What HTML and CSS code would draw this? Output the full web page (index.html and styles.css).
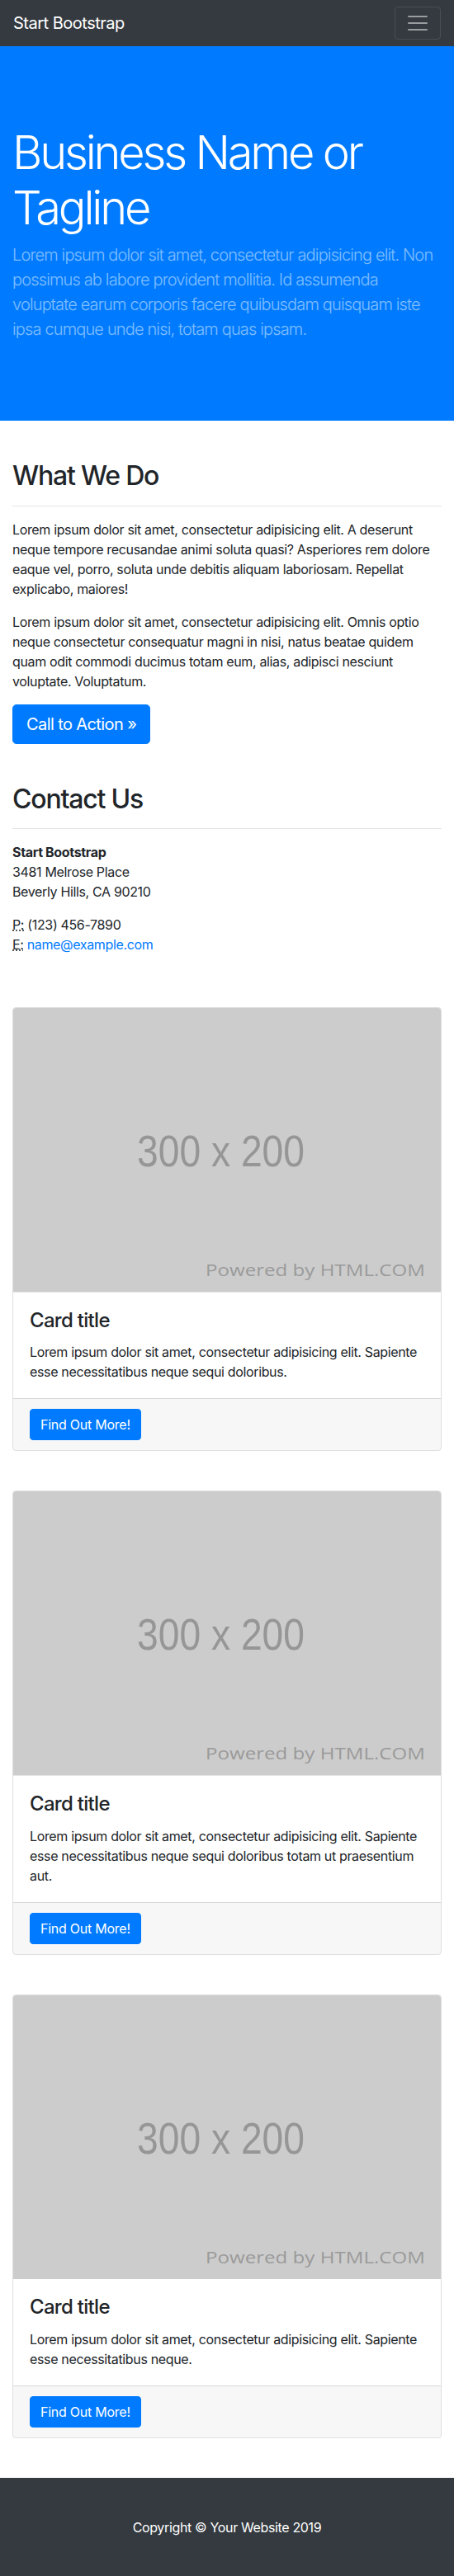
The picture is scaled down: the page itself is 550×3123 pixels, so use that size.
FILE: index.html
```
<!DOCTYPE html>
<html lang="en">
<head>
<meta charset="utf-8">
<title>Business Frontpage - Start Bootstrap Template</title>
<link rel="stylesheet" href="styles.css">
</head>
<body>
<nav class="navbar">
  <a class="brand" href="#">Start Bootstrap</a>
  <button class="toggler" type="button" aria-label="Toggle navigation">
    <svg class="toggler-icon" viewBox="0 0 30 30" width="30" height="30"><path d="M4 7h22M4 15h22M4 23h22" stroke="rgba(255,255,255,0.5)" stroke-width="2" stroke-linecap="round" stroke-miterlimit="10" fill="none"/></svg>
  </button>
</nav>

<header class="hero">
  <div class="container">
    <h1 class="display">Business Name or Tagline</h1>
    <p class="lead">Lorem ipsum dolor sit amet, consectetur adipisicing elit. Non possimus ab labore provident mollitia. Id assumenda voluptate earum corporis facere quibusdam quisquam iste ipsa cumque unde nisi, totam quas ipsam.</p>
  </div>
</header>

<main class="container">
  <section class="block">
    <h2>What We Do</h2>
    <hr>
    <p>Lorem ipsum dolor sit amet, consectetur adipisicing elit. A deserunt neque tempore recusandae animi soluta quasi? Asperiores rem dolore eaque vel, porro, soluta unde debitis aliquam laboriosam. Repellat explicabo, maiores!</p>
    <p>Lorem ipsum dolor sit amet, consectetur adipisicing elit. Omnis optio neque consectetur consequatur magni in nisi, natus beatae quidem quam odit commodi ducimus totam eum, alias, adipisci nesciunt voluptate. Voluptatum.</p>
    <div class="btn-line"><a class="btn btn-lg" href="#">Call to Action &raquo;</a></div>
  </section>

  <section class="block">
    <h2>Contact Us</h2>
    <hr>
    <address>
      <strong>Start Bootstrap</strong><br>
      3481 Melrose Place<br>
      Beverly Hills, CA 90210
    </address>
    <address>
      <abbr title="Phone">P:</abbr> (123) 456-7890<br>
      <abbr title="Email">E:</abbr> <a class="link" href="#">name@example.com</a>
    </address>
  </section>

  <div class="card">
    <svg class="card-img" viewBox="0 0 518 345.33" preserveAspectRatio="none">
      <rect width="518" height="345.33" fill="#cccccc"/>
      <text class="ph-size" x="150" y="192.6" textLength="203" lengthAdjust="spacingAndGlyphs">300 x 200</text>
      <text class="ph-by" x="233" y="325.6" textLength="266" lengthAdjust="spacingAndGlyphs">Powered by HTML.COM</text>
    </svg>
    <div class="card-body">
      <h4 class="card-title">Card title</h4>
      <p class="card-text">Lorem ipsum dolor sit amet, consectetur adipisicing elit. Sapiente esse necessitatibus neque sequi doloribus.</p>
    </div>
    <div class="card-footer"><a class="btn" href="#">Find Out More!</a></div>
  </div>

  <div class="card">
    <svg class="card-img" viewBox="0 0 518 345.33" preserveAspectRatio="none">
      <rect width="518" height="345.33" fill="#cccccc"/>
      <text class="ph-size" x="150" y="192.6" textLength="203" lengthAdjust="spacingAndGlyphs">300 x 200</text>
      <text class="ph-by" x="233" y="325.6" textLength="266" lengthAdjust="spacingAndGlyphs">Powered by HTML.COM</text>
    </svg>
    <div class="card-body">
      <h4 class="card-title">Card title</h4>
      <p class="card-text">Lorem ipsum dolor sit amet, consectetur adipisicing elit. Sapiente esse necessitatibus neque sequi doloribus totam ut praesentium aut.</p>
    </div>
    <div class="card-footer"><a class="btn" href="#">Find Out More!</a></div>
  </div>

  <div class="card">
    <svg class="card-img" viewBox="0 0 518 345.33" preserveAspectRatio="none">
      <rect width="518" height="345.33" fill="#cccccc"/>
      <text class="ph-size" x="150" y="192.6" textLength="203" lengthAdjust="spacingAndGlyphs">300 x 200</text>
      <text class="ph-by" x="233" y="325.6" textLength="266" lengthAdjust="spacingAndGlyphs">Powered by HTML.COM</text>
    </svg>
    <div class="card-body">
      <h4 class="card-title">Card title</h4>
      <p class="card-text">Lorem ipsum dolor sit amet, consectetur adipisicing elit. Sapiente esse necessitatibus neque.</p>
    </div>
    <div class="card-footer"><a class="btn" href="#">Find Out More!</a></div>
  </div>
</main>

<footer class="site-footer">
  <div class="container">
    <p class="copy">Copyright &copy; Your Website 2019</p>
  </div>
</footer>
</body>
</html>
```
FILE: styles.css
```
*, *::before, *::after { box-sizing: border-box; }

body {
  margin: 0;
  font-family: Inter, "Noto Sans", "Liberation Sans", sans-serif;
  font-size: 16px;
  font-weight: 400;
  line-height: 1.5;
  letter-spacing: -0.35px;
  color: #212529;
  background: #fff;
}

.container {
  padding: 0 15px;
}

/* Navbar */
.navbar {
  height: 56px;
  background: #343a40;
  padding: 8px 16px;
  display: flex;
  align-items: center;
  justify-content: space-between;
}
.brand {
  color: #fff;
  font-size: 20px;
  line-height: 30px;
  letter-spacing: -0.5px;
  padding: 5px 0;
  text-decoration: none;
}
.toggler {
  width: 56px;
  height: 40px;
  padding: 4px 12px;
  background: transparent;
  border: 1px solid rgba(255,255,255,0.1);
  border-radius: 4px;
  display: flex;
  align-items: center;
  justify-content: center;
}
.toggler-icon { display: block; width: 30px; height: 30px; }

/* Hero */
.hero {
  background: #007bff;
  padding: 48px 0;
  margin-bottom: 48px;
}
.display {
  margin: 48px 0 8px;
  font-size: 56px;
  font-weight: 300;
  line-height: 1.2;
  letter-spacing: -3.2px;
  color: #fff;
}
.lead {
  margin: 0 0 48px;
  font-size: 20px;
  font-weight: 300;
  line-height: 30px;
  letter-spacing: -0.85px;
  color: rgba(255,255,255,0.5);
}

/* Content */
.block {
  display: flow-root;
  margin-bottom: 48px;
}
h2 {
  margin: 0 0 8px;
  font-size: 32px;
  font-weight: 500;
  line-height: 1.2;
  letter-spacing: -1.2px;
}
hr {
  margin: 16px 0;
  border: 0;
  border-top: 1px solid rgba(0,0,0,0.1);
  height: 0;
}
p { margin: 0 0 16px; }

address {
  margin: 0 0 16px;
  font-style: normal;
  line-height: inherit;
}
address strong { font-weight: 700; }
abbr[title] {
  text-decoration: underline dotted;
  cursor: help;
}
.link { color: #007bff; text-decoration: none; }

.btn-line { line-height: 0; }
.btn {
  display: inline-block;
  vertical-align: top;
  color: #fff;
  background: #007bff;
  border: 1px solid #007bff;
  border-radius: 4px;
  padding: 6px 12px;
  font-size: 16px;
  line-height: 24px;
  letter-spacing: -0.25px;
  text-decoration: none;
}
.btn-lg {
  padding: 8px 16px;
  font-size: 20px;
  line-height: 30px;
  letter-spacing: -0.6px;
  border-radius: 4.8px;
}

/* Cards */
.card {
  display: flow-root;
  border: 1px solid rgba(0,0,0,0.125);
  border-radius: 4px;
  margin-bottom: 48px;
  overflow: hidden;
}
.card-img {
  display: block;
  width: 100%;
  height: 344.5px;
  border-radius: 3px 3px 0 0;
}
.ph-size {
  font-family: "Liberation Sans", Arial, sans-serif;
  font-size: 53px;
  letter-spacing: 0;
  fill: #969696;
}
.ph-by {
  font-family: "Open Sans", "Noto Sans", sans-serif;
  font-size: 20.5px;
  letter-spacing: 0;
  fill: #9a9a9a;
}
.card-body { padding: 20px; }
.card-title {
  margin: 0 0 12px;
  font-size: 24px;
  font-weight: 500;
  line-height: 1.2;
  letter-spacing: -0.7px;
}
.card-text { margin: 0; }
.card-footer {
  padding: 12px 20px;
  background: rgba(0,0,0,0.03);
  border-top: 1px solid rgba(0,0,0,0.125);
  line-height: 0;
}

/* Footer */
.site-footer {
  background: #343a40;
  padding: 48px 0;
}
.copy {
  margin: 0;
  text-align: center;
  color: #fff;
}
```
